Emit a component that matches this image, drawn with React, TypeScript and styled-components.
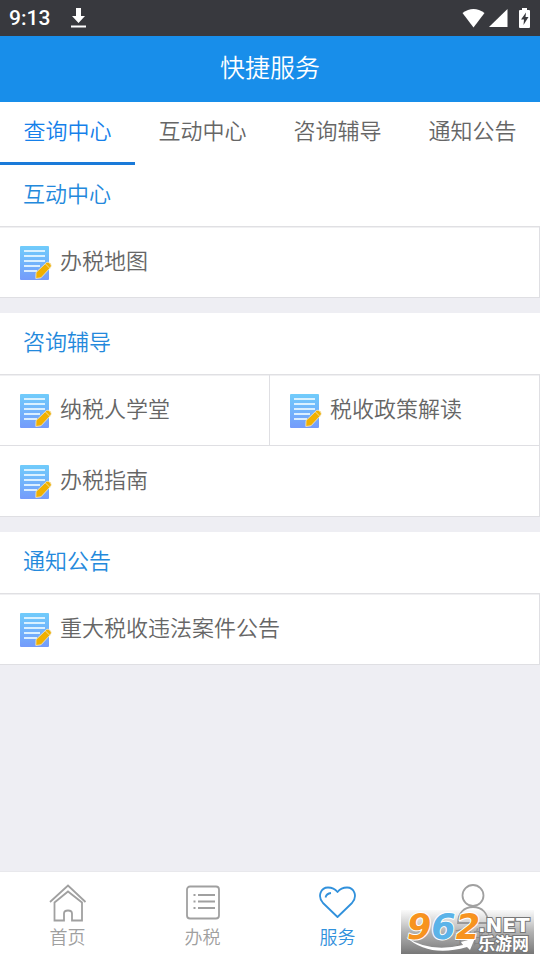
import React from "react";
import styled, { createGlobalStyle } from "styled-components";

const GlobalStyle = createGlobalStyle`
  *, *::before, *::after { box-sizing: border-box; }
  html, body { margin: 0; background: #eeeef3; }
  body, button {
    font-family: "Noto Sans CJK SC", "Liberation Sans", sans-serif;
    font-weight: 350;
  }
`;

const Page = styled.div`
  display: flex;
  flex-direction: column;
  min-height: 100vh;
`;

const StatusBar = styled.div`
  display: flex;
  align-items: center;
  height: 36px;
  padding: 0 8px 0 9px;
  background: #38393e;
  color: #fff;
`;

const Clock = styled.span`
  font: 500 21px/36px Roboto, sans-serif;
  margin-right: 20px;
`;

const StatusIcons = styled.div`
  display: flex;
  align-items: center;
  gap: 4px;
  margin-left: auto;
`;

const Header = styled.header`
  display: flex;
  justify-content: center;
  height: 66px;
  background: #188eea;
`;

const Title = styled.h1`
  margin: 0;
  font-size: 25px;
  line-height: 60px;
  font-weight: 350;
  color: #fff;
`;

const Tabs = styled.nav`
  display: grid;
  grid-template-columns: repeat(4, 1fr);
  height: 63px;
  background: #fff;
`;

const Tab = styled.button<{ $active?: boolean }>`
  border: 0;
  border-bottom: 3px solid ${(p) => (p.$active ? "#1a7ad9" : "transparent")};
  padding: 0 0 6px;
  background: none;
  font-size: 22px;
  line-height: 32px;
  color: ${(p) => (p.$active ? "#1580ea" : "#666")};
`;

const Content = styled.main`
  display: flex;
  flex: 1;
  flex-direction: column;
  gap: 15px;
`;

const Section = styled.section`
  background: #fff;
`;

const SectionTitle = styled.h2`
  height: 62px;
  margin: 0;
  padding-left: 23px;
  border-bottom: 1px solid #e0e0e3;
  font-size: 22px;
  line-height: 54px;
  font-weight: 350;
  color: #2389dc;
`;

const Items = styled.div`
  display: grid;
  grid-template-columns: repeat(2, 1fr);
  box-shadow: inset 0 1px #f0f0f2;
`;

const Item = styled.button<{ $wide?: boolean }>`
  display: flex;
  align-items: center;
  grid-column: ${(p) => (p.$wide ? "1 / -1" : "auto")};
  gap: 8px;
  height: 71px;
  padding: 1px 0 0 19px;
  border: solid #dfdfe3;
  border-width: 0 1px 1px 0;
  background: none;
  color: #666;
`;

const ItemLabel = styled.span`
  padding-bottom: 7px;
  font-size: 22px;
  line-height: 32px;
`;

const BottomNav = styled.nav`
  position: relative;
  display: grid;
  grid-template-columns: repeat(4, 1fr);
  height: 89px;
  border-top: 1px solid #e8e8ec;
  background: #fff;
`;

const NavItem = styled.button<{ $active?: boolean }>`
  display: flex;
  flex-direction: column;
  align-items: center;
  padding: 10px 0 0;
  border: 0;
  background: none;
  font-size: 18px;
  line-height: 24px;
  color: ${(p) => (p.$active ? "#3191dc" : "#a0a0a0")};
`;

const NavIcon = styled.svg`
  width: 40px;
  height: 42px;
  fill: none;
  stroke: currentColor;
  stroke-width: 1.8;
`;

const Watermark = styled.div`
  position: absolute;
  right: 6px;
  bottom: 6px;
  width: 133px;
  height: 44px;

  svg {
    display: block;
    overflow: visible;
  }
`;

const noteLines = [
  { y: 6, end: 26 },
  { y: 11, end: 26 },
  { y: 16, end: 26 },
  { y: 21, end: 21 },
  { y: 26, end: 18 },
];

const NoteIcon = () => (
  <svg width="33" height="36" viewBox="0 0 33 36" aria-hidden="true">
    <defs>
      <linearGradient id="paper" x1="0" y1="0" x2="0" y2="1">
        <stop offset="0" stopColor="#70ccfb" />
        <stop offset="1" stopColor="#749bfb" />
      </linearGradient>
    </defs>
    <rect x="1" y="1" width="29" height="34" rx="1" fill="url(#paper)" />
    {noteLines.map((line) => (
      <path key={line.y} d={`M5 ${line.y}H${line.end}`} stroke="#e6f6ff" strokeWidth="1.8" />
    ))}
    <path
      d="M16.800 33.500 17 27.500 27.500 17.500Q29 16.500 31 18.300T32 22L22 32.800Z"
      fill="#f0b000"
      stroke="#f2ead2"
      strokeWidth="0.8"
      strokeLinejoin="round"
    />
    <path d="m26.500 19 4.300 4.300" stroke="#f5dd96" strokeWidth="1" />
  </svg>
);

const sections = [
  { title: "互动中心", items: [{ label: "办税地图", wide: true }] },
  {
    title: "咨询辅导",
    items: [{ label: "纳税人学堂" }, { label: "税收政策解读" }, { label: "办税指南", wide: true }],
  },
  { title: "通知公告", items: [{ label: "重大税收违法案件公告", wide: true }] },
];

const tabs = ["查询中心", "互动中心", "咨询辅导", "通知公告"];

const navItems = [
  {
    label: "首页",
    icon: <path d="M3 20 21 3.500 38.500 20M7.500 20.500V38.500H17V31.500Q17 28.500 21 28.500T25 31.500V38.500H35V20.500L21 9.500Z" />,
  },
  {
    label: "办税",
    icon: (
      <>
        <rect x="5" y="4.500" width="32" height="32" rx="3" />
        <path d="M16 13H33M16 19.500H33M16 26H33" />
        <path d="M11.500 13h3M11.500 19.500h3M11.500 26h3" strokeDasharray="2 1" />
      </>
    ),
  },
  {
    label: "服务",
    icon: (
      <>
        <path
          d="M20.500 35 6 21C0 14 4 5.500 11 5.500C15.500 5.500 18.500 7.500 20.500 10C22.500 7.500 25.500 5.500 30 5.500C37 5.500 41 14 35 21Z"
          strokeLinejoin="round"
        />
        <path d="M8.500 15.500Q9.500 11.500 14 11" />
      </>
    ),
  },
  {
    label: "我的",
    icon: (
      <>
        <circle cx="21" cy="13.500" r="10.500" />
        <path d="M6 41C6 31 12 25 21 25S36 31 36 41Z" />
      </>
    ),
  },
];

const WatermarkLogo = () => (
  <Watermark>
    <svg width="133" height="44" viewBox="0 0 133 44" role="img" aria-label="962.NET 乐游网">
      <defs>
        <linearGradient id="shade" x1="0" y1="0" x2="0" y2="1">
          <stop offset="0" stopColor="#999" stopOpacity="0.05" />
          <stop offset="0.5" stopColor="#888" stopOpacity="0.65" />
          <stop offset="1" stopColor="#707070" stopOpacity="0.95" />
        </linearGradient>
      </defs>
      <rect width="133" height="44" fill="url(#shade)" />
      <path d="M5 27Q28 43 62 35L60 32 74 28 69 40 66 37Q28 48 5 27Z" fill="#fff" />
      <text
        x="6"
        y="29"
        fontFamily="DejaVu Sans, sans-serif"
        fontWeight="700"
        fontStyle="italic"
        fontSize="35"
        stroke="#fff"
        strokeWidth="2"
        strokeLinejoin="round"
        paintOrder="stroke"
      >
        <tspan fill="#f7931f">9</tspan>
        <tspan fill="#5bb3e8">6</tspan>
        <tspan fill="#f7931f">2</tspan>
      </text>
      <g fill="#fff" stroke="#777" strokeWidth="2" paintOrder="stroke" fontWeight="700">
        <text x="77" y="22" fontFamily="DejaVu Sans, sans-serif" fontSize="20">.NET</text>
        <text x="77" y="40" fontFamily="Noto Sans CJK SC, sans-serif" fontSize="17">乐游网</text>
      </g>
    </svg>
  </Watermark>
);

export default function App() {
  return (
    <Page>
      <GlobalStyle />
      <StatusBar>
        <Clock>9:13</Clock>
        <svg width="17" height="22" viewBox="0 0 17 22" fill="#fff" aria-hidden="true">
          <path d="M6 1h5v8h4l-6.500 7L2 9h4zM1 18.500h15v2H1z" />
        </svg>
        <StatusIcons>
          <svg width="23" height="20" viewBox="0 0 23 20" fill="#fff" aria-hidden="true">
            <path d="M11.500 19.500.5 5Q11.500-3 22.500 5Z" />
          </svg>
          <svg width="19" height="20" viewBox="0 0 19 20" fill="#fff" aria-hidden="true">
            <path d="M0 19 18.500 1V19Z" />
          </svg>
          <svg width="20" height="22" viewBox="0 0 20 22" aria-hidden="true">
            <path d="M10 1h5v2h2q1 0 1 1v16q0 1-1 1H8q-1 0-1-1V4q0-1 1-1h2z" fill="#fff" />
            <path d="m14 5.500-5 7h3l-.5 5.500 5-8h-3z" fill="#38393e" />
          </svg>
        </StatusIcons>
      </StatusBar>
      <Header>
        <Title>快捷服务</Title>
      </Header>
      <Tabs>
        {tabs.map((tab, i) => (
          <Tab key={tab} $active={i === 0}>{tab}</Tab>
        ))}
      </Tabs>
      <Content>
        {sections.map((section) => (
          <Section key={section.title}>
            <SectionTitle>{section.title}</SectionTitle>
            <Items>
              {section.items.map((item) => (
                <Item key={item.label} $wide={"wide" in item}>
                  <NoteIcon />
                  <ItemLabel>{item.label}</ItemLabel>
                </Item>
              ))}
            </Items>
          </Section>
        ))}
      </Content>
      <BottomNav>
        {navItems.map((item) => (
          <NavItem key={item.label} $active={item.label === "服务"}>
            <NavIcon viewBox="1 0 40 42" aria-hidden="true">{item.icon}</NavIcon>
            {item.label}
          </NavItem>
        ))}
        <WatermarkLogo />
      </BottomNav>
    </Page>
  );
}
